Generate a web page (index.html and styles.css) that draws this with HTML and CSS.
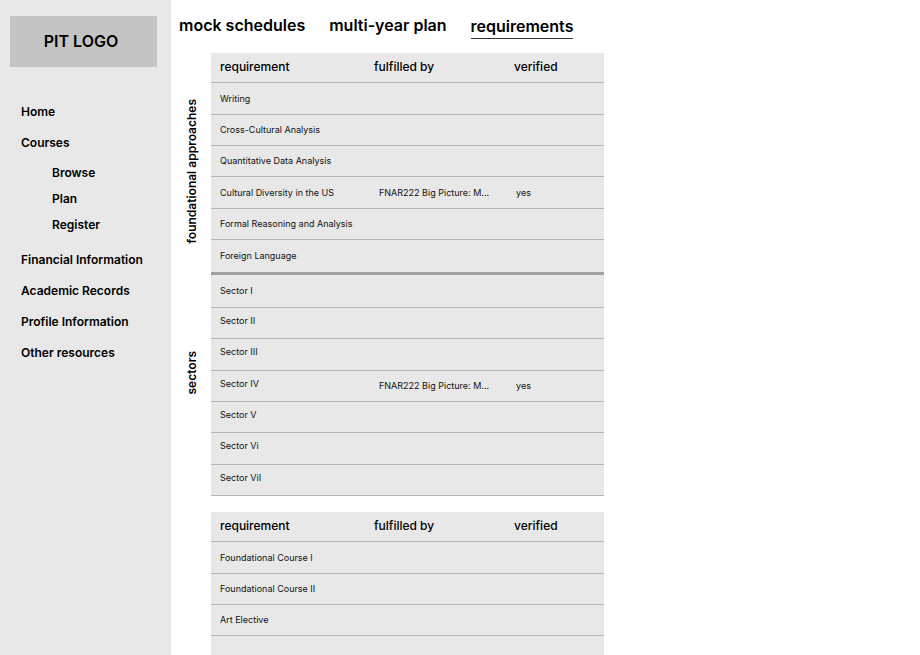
FILE: index.html
```html
<!DOCTYPE html>
<html lang="en">
<head>
<meta charset="utf-8">
<title>Requirements</title>
<link rel="stylesheet" href="styles.css">
</head>
<body>
<div class="page">
  <aside class="sidebar">
    <div class="logo">PIT LOGO</div>
    <nav>
      <ul class="menu">
        <li><a href="#">Home</a></li>
        <li><a href="#">Courses</a>
          <ul class="submenu">
            <li><a href="#">Browse</a></li>
            <li><a href="#">Plan</a></li>
            <li><a href="#">Register</a></li>
          </ul>
        </li>
        <li><a href="#">Financial Information</a></li>
        <li><a href="#">Academic Records</a></li>
        <li><a href="#">Profile Information</a></li>
        <li><a href="#">Other resources</a></li>
      </ul>
    </nav>
  </aside>
  <main>
    <nav class="tabs">
      <a href="#">mock schedules</a>
      <a href="#">multi-year plan</a>
      <a href="#" class="active" aria-current="page">requirements</a>
    </nav>
    <table class="reqs">
      <colgroup><col class="c-group"><col class="c-name"><col class="c-by"><col></colgroup>
      <thead>
        <tr><td class="group"></td><th scope="col">requirement</th><th scope="col">fulfilled by</th><th scope="col">verified</th></tr>
      </thead>
      <tbody class="foundations">
        <tr><th class="group" scope="rowgroup" rowspan="6"><span>foundational approaches</span></th><td>Writing</td><td></td><td></td></tr>
        <tr><td>Cross-Cultural Analysis</td><td></td><td></td></tr>
        <tr><td>Quantitative Data Analysis</td><td></td><td></td></tr>
        <tr><td>Cultural Diversity in the US</td><td class="by">FNAR222 Big Picture: M...</td><td class="ok">yes</td></tr>
        <tr><td>Formal Reasoning and Analysis</td><td></td><td></td></tr>
        <tr class="last"><td>Foreign Language</td><td></td><td></td></tr>
      </tbody>
      <tbody class="sectors">
        <tr class="first"><th class="group" scope="rowgroup" rowspan="7"><span>sectors</span></th><td>Sector I</td><td></td><td></td></tr>
        <tr><td class="name">Sector II</td><td></td><td></td></tr>
        <tr><td class="name">Sector III</td><td></td><td></td></tr>
        <tr><td class="name">Sector IV</td><td class="by">FNAR222 Big Picture: M...</td><td class="ok">yes</td></tr>
        <tr><td class="name">Sector V</td><td></td><td></td></tr>
        <tr><td class="name">Sector Vi</td><td></td><td></td></tr>
        <tr><td class="name">Sector ViI</td><td></td><td></td></tr>
      </tbody>
    </table>
    <table class="reqs">
      <colgroup><col class="c-group"><col class="c-name"><col class="c-by"><col></colgroup>
      <thead>
        <tr><td class="group"></td><th scope="col">requirement</th><th scope="col">fulfilled by</th><th scope="col">verified</th></tr>
      </thead>
      <tbody class="foundations">
        <tr><td class="group" rowspan="4"></td><td>Foundational Course I</td><td></td><td></td></tr>
        <tr><td>Foundational Course II</td><td></td><td></td></tr>
        <tr><td>Art Elective</td><td></td><td></td></tr>
        <tr class="open"><td></td><td></td><td></td></tr>
      </tbody>
    </table>
  </main>
</div>
</body>
</html>
```

FILE: styles.css
```css
* { box-sizing: border-box; }

body {
  margin: 0;
  background: #fff;
  color: #000;
  font-family: Inter, "Liberation Sans", sans-serif;
}

a { color: inherit; text-decoration: none; }
ul { list-style: none; margin: 0; padding: 0; }

.page {
  display: grid;
  grid-template-columns: 171px 1fr;
  min-height: calc(100vh - 1px);
}

.sidebar {
  background: #e8e8e8;
  padding: 16px 14px 0 10px;
}

.logo {
  display: flex;
  align-items: center;
  justify-content: center;
  height: 51px;
  padding: 0 5px 2px 0;
  background: #c4c4c4;
  font-size: 16px;
  font-weight: 600;
}

.menu {
  display: flex;
  flex-direction: column;
  gap: 15px;
  margin-top: 37px;
  padding-left: 11px;
  font-size: 12px;
  line-height: 16px;
  font-weight: 600;
  white-space: nowrap;
}
.menu a { display: block; }

.submenu {
  display: flex;
  flex-direction: column;
  gap: 10px;
  margin: 14px 0 4px;
  padding-left: 31px;
}

.tabs {
  display: flex;
  align-items: flex-start;
  gap: 24px;
  height: 53px;
  padding: 15px 0 0 8px;
  font-size: 16px;
  line-height: 20px;
  font-weight: 600;
}
.tabs .active {
  padding: 1px 0 2px;
  border-bottom: 1px solid #333;
}

.reqs {
  width: 100%;
  max-width: 433px;
  margin-bottom: 16px;
  table-layout: fixed;
  border-spacing: 0;
  font-size: 9px;
  line-height: 12px;
}
.reqs:last-child { margin-bottom: 0; }

.c-group { width: 40px; }
.c-name { width: 154px; }
.c-by { width: 140px; }

.reqs tr { height: 31px; }
.reqs thead tr { height: 30px; }
.foundations tr:nth-child(3n+1),
.sectors tr:nth-child(3n) { height: 32px; }
.reqs .first { height: 33px; }
.reqs .last { height: 35px; }
.reqs .open { height: 18px; }

.reqs th,
.reqs td {
  padding: 0 0 0 9px;
  background: #e8e8e8;
  border-bottom: 1px solid #b8b8b8;
  text-align: left;
  white-space: nowrap;
  color: #111;
}
.reqs thead th {
  padding-bottom: 2px;
  font-size: 12px;
  font-weight: 500;
  color: #000;
}
.reqs .last td { border-bottom: 3px solid #a0a0a0; }
.reqs .open td { border-bottom: 0; }
.reqs .name { padding-bottom: 5px; }
.reqs .by { padding-left: 14px; }
.reqs .ok { padding-left: 11px; }

.reqs .group {
  padding: 0 0 0 2px;
  border: 0;
  background: none;
  text-align: center;
  font-size: 12px;
  font-weight: 600;
  color: #000;
}
.reqs.reqs .foundations .group,
.reqs .foundations .group { padding-bottom: 13px; }
.reqs .sectors .group { padding-bottom: 24px; }
.group span {
  display: inline-block;
  writing-mode: vertical-rl;
  transform: rotate(180deg);
}
```
